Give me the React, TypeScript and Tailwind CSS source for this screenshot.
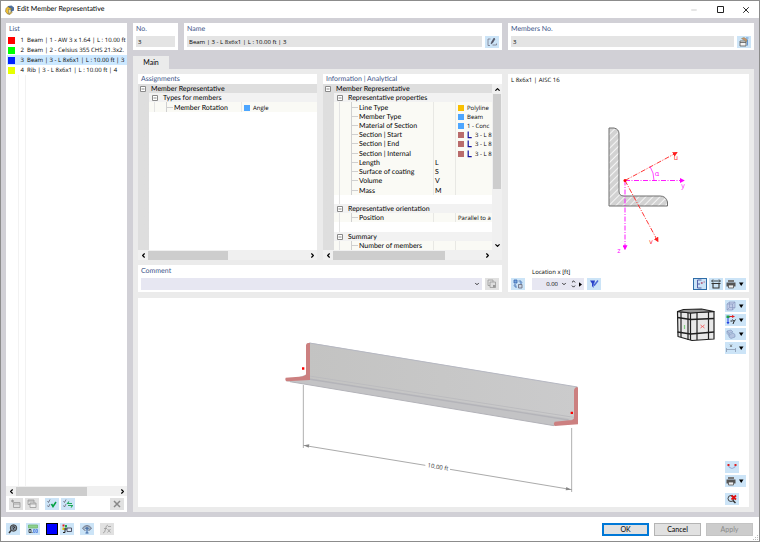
import type { ReactNode } from "react";
import { ChevronDown, ChevronLeft, ChevronRight, ChevronUp, Minus, X } from "lucide-react";
import clsx from "clsx";

// compact face for values and codes, the rest of the dialog uses the root font
const dataText = "font-['Open_Sans','Noto_Sans',sans-serif] text-[6px]";

const members = [
  { no: 1, color: "bg-[#ff0000]", label: "Beam | 1 - AW 3 x 1.64 | L : 10.00 ft" },
  { no: 2, color: "bg-[#00ff00]", label: "Beam | 2 - Celsius 355 CHS 21.3x2." },
  { no: 3, color: "bg-[#0022ff]", label: "Beam | 3 - L 8x6x1 | L : 10.00 ft | 3" },
  { no: 4, color: "bg-[#e6ff00]", label: "Rib | 3 - L 8x6x1 | L : 10.00 ft | 4" },
];

type TreeRow = {
  kind: "root" | "group" | "item" | "blank";
  label?: string;
  symbol?: string;
  value?: string;
  swatch?: string;
  section?: boolean;
};

const assignments: TreeRow[] = [
  { kind: "root", label: "Member Representative" },
  { kind: "group", label: "Types for members" },
  { kind: "item", label: "Member Rotation", value: "Angle", swatch: "bg-[#4da6ff]" },
];

const information: TreeRow[] = [
  { kind: "root", label: "Member Representative" },
  { kind: "group", label: "Representative properties" },
  { kind: "item", label: "Line Type", value: "Polyline", swatch: "bg-[#f9c000]" },
  { kind: "item", label: "Member Type", value: "Beam", swatch: "bg-[#4da6ff]" },
  { kind: "item", label: "Material of Section", value: "1 - Conc", swatch: "bg-[#4da6ff]" },
  { kind: "item", label: "Section | Start", value: "3 - L 8", swatch: "bg-[#b96b6b]", section: true },
  { kind: "item", label: "Section | End", value: "3 - L 8", swatch: "bg-[#b96b6b]", section: true },
  { kind: "item", label: "Section | Internal", value: "3 - L 8", swatch: "bg-[#b96b6b]", section: true },
  { kind: "item", label: "Length", symbol: "L" },
  { kind: "item", label: "Surface of coating", symbol: "S" },
  { kind: "item", label: "Volume", symbol: "V" },
  { kind: "item", label: "Mass", symbol: "M" },
  { kind: "blank" },
  { kind: "group", label: "Representative orientation" },
  { kind: "item", label: "Position", value: "Parallel to a" },
  { kind: "blank" },
  { kind: "group", label: "Summary" },
  { kind: "item", label: "Number of members" },
];

function Icon({ children }: { children: ReactNode }) {
  return (
    <svg viewBox="0 0 20 20" className="size-[10px] shrink-0" fill="none" stroke="#444" strokeWidth="1.6">
      {children}
    </svg>
  );
}

function ToolButton({ label, children, menu, disabled, active }: {
  label: string;
  children: ReactNode;
  menu?: boolean;
  disabled?: boolean;
  active?: boolean;
}) {
  return (
    <button
      type="button"
      aria-label={label}
      disabled={disabled}
      className={clsx(
        "flex h-3 shrink-0 items-center",
        menu ? "w-[21px] justify-between px-px" : "w-[14px] justify-center",
        disabled ? "bg-[#e1e1e1]" : "bg-[#cce4f7]",
        active && "border border-[#2f6da8]",
      )}
    >
      {children}
      {menu && <Caret />}
    </button>
  );
}

function Caret() {
  return (
    <svg viewBox="0 0 8 8" className="size-2 shrink-0">
      <path d="M2 2.5h4.5L4.2 6z" fill="#000" />
    </svg>
  );
}

const printIcon = (
  <Icon>
    <path d="M4 2h12v4H4z" fill="#777" stroke="none" />
    <path d="M1 7h18v8H1z" fill="#555" stroke="none" />
    <path d="M5 12h10v6H5z" fill="#eee" stroke="#555" />
  </Icon>
);

function PanelTitle({ children }: { children: ReactNode }) {
  return <h2 className="h-[10px] px-[3px] leading-[11px] text-[#3c5488]">{children}</h2>;
}

function HScroll({ thumb, corner }: { thumb: string; corner?: boolean }) {
  return (
    <div className="flex h-[10px] shrink-0 items-center bg-[#f0f0f0]">
      <button type="button" aria-label="Scroll left" className="flex w-[10px] justify-center">
        <ChevronLeft className="size-[7px]" strokeWidth={4} />
      </button>
      <div className="h-[9px] flex-1">
        <div className={clsx("h-full bg-[#cdcdcd]", thumb)} />
      </div>
      <button type="button" aria-label="Scroll right" className="flex w-[10px] justify-center">
        <ChevronRight className="size-[7px]" strokeWidth={4} />
      </button>
      {corner && <div className="w-[10px]" />}
    </div>
  );
}

function Toggle() {
  return (
    <svg viewBox="0 0 6 6" className="size-[6px] shrink-0" fill="#fff" stroke="#8a8a8a" strokeWidth="1">
      <path d="M.5 .5h5v5h-5zM1.5 3h3" />
    </svg>
  );
}

function Tree({ rows, symbols }: { rows: TreeRow[]; symbols?: boolean }) {
  return (
    <div className="grid min-h-0 flex-1 grid-rows-[repeat(18,minmax(0,1fr))] overflow-hidden bg-white bg-linear-to-r from-[#dedede] from-[11px] to-white to-[11px] leading-[10px]">
      {rows.map((row, i) => {
        if (row.kind === "blank") return <div key={i} className="ml-4 border-l border-[#e4e4e4]" />;
        if (row.kind === "root") {
          return (
            <div key={i} className="flex items-center gap-[5px] bg-[#dedede] pt-px pl-[2px]">
              <Toggle />
              <span>{row.label}</span>
            </div>
          );
        }
        if (row.kind === "group") {
          return (
            <div key={i} className="ml-[11px] flex items-center gap-[5px] bg-[#f2f2f2] pt-px pl-[3px]">
              <Toggle />
              <span>{row.label}</span>
            </div>
          );
        }
        return (
          <div key={i} className="ml-[11px] flex items-stretch bg-[#fafaf5] whitespace-nowrap">
            <div className="ml-[5px] w-3 shrink-0 border-l border-[#e4e4e4]" />
            <div className="flex w-2 shrink-0 items-center border-l border-[#d0d0d0]">
              <div className="h-px w-[6px] bg-[#d0d0d0]" />
            </div>
            <div className={clsx("flex shrink-0 items-center pt-px", symbols ? "w-[74px]" : "w-[67px]")}>{row.label}</div>
            {symbols && (
              <div className="flex w-[22px] shrink-0 items-center border-l border-[#e8e8e4] pt-px pl-px">{row.symbol}</div>
            )}
            <div className={clsx("flex min-w-0 flex-1 items-center gap-[3px] border-l border-[#e8e8e4] pt-px pl-[2px]", dataText)}>
              {row.swatch && <span className={clsx("size-[6px] shrink-0", row.swatch)} />}
              {row.section && (
                <svg viewBox="0 0 5 8" className="h-2 w-[5px] shrink-0" fill="none" stroke="#1414a0" strokeWidth="1.2">
                  <path d="M1.2 0.6v6h3.500" />
                </svg>
              )}
              <span>{row.value}</span>
            </div>
          </div>
        );
      })}
    </div>
  );
}

function TitleBar() {
  return (
    <header className="flex h-[17px] shrink-0 items-center bg-white pl-[4px]">
      <svg viewBox="0 0 20 20" className="size-[10px]">
        <path d="M6 2l7-1 5 4v6l-6 3-7-3z" fill="#4d6f9e" />
        <path d="M2 7l4-4 3 3 4 1-2 4 3 4-4 4-5-1-4-5z" fill="#f0c030" stroke="#6a5a30" strokeWidth="1" />
        <path d="M7 8l5 2v5l-5 2z" fill="#e8e0b0" stroke="#555" strokeWidth=".8" />
      </svg>
      <h1 className="ml-[2px] flex-1 leading-[17px]">Edit Member Representative</h1>
      <button type="button" aria-label="Minimize" className="flex w-[26px] justify-center text-[#ccc]">
        <Minus className="size-2" strokeWidth={3} />
      </button>
      <button type="button" aria-label="Maximize" className="flex w-[26px] justify-center">
        <svg viewBox="0 0 7 7" className="size-[7px]" fill="none" stroke="#222">
          <path d="M.5 .5h6v6h-6z" />
        </svg>
      </button>
      <button type="button" aria-label="Close" className="flex w-[26px] justify-center">
        <X className="size-[10px]" strokeWidth={2} />
      </button>
    </header>
  );
}

function MemberList() {
  return (
    <aside className="flex w-[121px] shrink-0 flex-col bg-white">
      <h2 className="h-3 px-[3px] leading-[12px] text-[#3c5488]">List</h2>
      <ul className={clsx("flex flex-1 flex-col bg-white leading-[10px]", dataText)}>
        {members.map((m) => (
          <li
            key={m.no}
            className={clsx("ml-px flex h-[10px] items-center pl-px whitespace-nowrap", m.no === 3 && "bg-[#cce8ff]")}
          >
            <span className={clsx("size-[7px] shrink-0", m.color)} />
            <span className="w-[9px] shrink-0 text-right">{m.no}</span>
            <span className="ml-[3px]">{m.label}</span>
          </li>
        ))}
        <li aria-hidden="true" className="ml-3 w-2 flex-1 border-x border-[#f2f2f2]" />
      </ul>
      <HScroll thumb="w-[70%]" />
      <div className="flex h-4 items-center gap-[2px] px-[3px]">
        <ToolButton label="New" disabled>
          <Icon>
            <path d="M5 7h13v10H5zM5 10h13M3 1v6M0 4h6M1 2l4 4M5 2L1 6" stroke="#999" />
          </Icon>
        </ToolButton>
        <ToolButton label="Copy" disabled>
          <Icon>
            <path d="M2 2h12v9H2zM2 4h12" stroke="#999" />
            <path d="M6 8h12v9H6zM6 10h12" fill="#eee" stroke="#999" />
          </Icon>
        </ToolButton>
        <span className="w-[2px]" />
        <ToolButton label="Select all">
          <Icon>
            <path d="M1 4l2 3 3-6M1 13l2 3 3-6" stroke="#667" />
            <path d="M9 10l3 5 6-9" stroke="#00a040" strokeWidth="3" />
          </Icon>
        </ToolButton>
        <ToolButton label="Invert selection">
          <Icon>
            <path d="M1 4l2 3 3-6M1 13l2 3 3-6" stroke="#667" />
            <path d="M18 9h-9l3-4M10 13h9l-3 4" stroke="#20a858" strokeWidth="2.200" />
          </Icon>
        </ToolButton>
        <span className="flex-1" />
        <ToolButton label="Delete" disabled>
          <Icon>
            <path d="M4 4l12 12M16 4L4 16" stroke="#888" strokeWidth="3" />
          </Icon>
        </ToolButton>
      </div>
    </aside>
  );
}

function Field({ id, label, value, className, children }: {
  id: string;
  label: string;
  value: string;
  className: string;
  children?: ReactNode;
}) {
  return (
    <div className={clsx("h-[27px] bg-white px-[3px]", className)}>
      <label htmlFor={id} className="block h-3 leading-[12px] text-[#3c5488]">{label}</label>
      <div className="flex h-[13px] items-center gap-[3px]">
        <input
          id={id}
          readOnly
          value={value}
          className={clsx("h-[11px] w-full min-w-0 flex-1 bg-[#e4e4e4] px-[2px] outline-none", dataText)}
        />
        {children}
      </div>
    </div>
  );
}

function SectionPreview() {
  return (
    <section className="flex w-[241px] shrink-0 flex-col bg-white px-[3px]">
      <h2 className={clsx("h-3 leading-[12px]", dataText)}>L 8x6x1 | AISC 16</h2>
      <svg viewBox="511 86 235 180" className={clsx("min-h-0 w-full flex-1", dataText)}>
        <defs>
          <pattern id="hatch" width="5" height="5" patternUnits="userSpaceOnUse" patternTransform="rotate(45)">
            <rect width="5" height="5" fill="#d2d2d2" />
            <path d="M0 0v5" stroke="#fff" strokeWidth="1.6" />
          </pattern>
          <marker id="arrow" viewBox="0 0 6 6" refX="5" refY="3" markerWidth="5" markerHeight="5" orient="auto" markerUnits="userSpaceOnUse">
            <path d="M0 0l6 3-6 3z" fill="context-stroke" />
          </marker>
        </defs>
        <path
          d="M609 127.500h5q5 1 5 6v57q0 5 5 5h36q6 0 7.500 6v4H609z"
          fill="url(#hatch)"
          stroke="#707070"
          strokeWidth="1"
        />
        <g fill="none" strokeWidth="0.9" strokeDasharray="5 1.500 1 1.500">
          <path d="M625 180h59" stroke="#ff00ff" markerEnd="url(#arrow)" />
          <path d="M625 180v69" stroke="#ff00ff" markerEnd="url(#arrow)" />
          <path d="M625 180l52-28" stroke="#ff2020" markerEnd="url(#arrow)" />
          <path d="M625 180l33 61" stroke="#ff2020" markerEnd="url(#arrow)" />
        </g>
        <path d="M654 180q0-8-4-14" fill="none" stroke="#ff00ff" strokeWidth="0.7" />
        <circle cx="625" cy="180" r="1.500" fill="#ff0000" />
        <g fontSize="7" textAnchor="middle">
          <text x="676" y="159" fill="#ff2020">u</text>
          <text x="683" y="187" fill="#ff00ff">y</text>
          <text x="657" y="175" fill="#ff00ff">α</text>
          <text x="651" y="243" fill="#ff2020">v</text>
          <text x="619" y="252" fill="#ff00ff">z</text>
        </g>
      </svg>
      <div className="flex items-end pb-[2px]">
        <ToolButton label="Switch section">
          <Icon>
            <path d="M2 2h6v6H2z" fill="#7aa7dc" stroke="#3565b0" />
            <path d="M11 11h7v7h-7z" fill="#c8d4e4" stroke="#667" />
            <path d="M11 4h5v5M8 16H4v-5M14 7l2 2 2-2M2 13l2-2 2 2" stroke="#3565b0" />
          </Icon>
        </ToolButton>
        <div className={clsx("ml-[7px]", dataText)}>
          <label htmlFor="location" className="block leading-[10px]">Location x [ft]</label>
          <div className="mt-px flex h-3 w-[52px] items-center bg-[#e7e7f2]">
            <input id="location" defaultValue="0.00" className="w-[26px] bg-transparent text-right outline-none" />
            <ChevronDown className="ml-[3px] size-[6px]" strokeWidth={3} />
            <span className="ml-[4px] flex flex-col">
              <ChevronUp className="size-[5px]" strokeWidth={4} />
              <ChevronDown className="size-[5px]" strokeWidth={4} />
            </span>
            <svg viewBox="0 0 4 6" className="ml-[3px] h-[5px] w-[3px]">
              <path d="M0 0l4 3-4 3z" />
            </svg>
          </div>
        </div>
        <span className="w-[3px]" />
        <ToolButton label="Pick location">
          <Icon>
            <path d="M2 3h10l-1 4-2 4v7l-3-4V9z" fill="#2840c8" stroke="none" />
            <path d="M8 9l3 3 7-9" stroke="#4a68d8" strokeWidth="3" />
          </Icon>
        </ToolButton>
        <span className="flex-1" />
        <div className="flex gap-[2px]">
          <ToolButton label="Section axes" active>
            <Icon>
              <path d="M5 2h8M5 2v16M5 18h8M5 10h5" stroke="#5560a8" strokeWidth="2" />
              <path d="M12 6l3 4M15 6l-3 4M17 6h3" stroke="#b05070" />
            </Icon>
          </ToolButton>
          <ToolButton label="Dimensions">
            <Icon>
              <path d="M2 4h16M4 1L1 4l3 3M16 1l3 3-3 3" stroke="#222" />
              <path d="M1 9h18M4 9v9h12V9" stroke="#333" strokeWidth="2.200" />
            </Icon>
          </ToolButton>
          <ToolButton label="Print section" menu>{printIcon}</ToolButton>
        </div>
      </div>
    </section>
  );
}

function NavigationCube() {
  return (
    <g stroke="#202020" strokeLinejoin="round">
      <path d="M677.500 311.500l13 1.500 23.500-1.500v27.500l-22 1.500-14-4z" fill="#e8e8e8" strokeWidth="1.200" />
      <path d="M677.500 311.500l6-2 18-.5 12.500 2.500-23.500 1.500z" fill="#999" strokeWidth="1.200" />
      <path d="M681 312v25M690.500 313v27M688 313v27M697 312.500v27.500M708.500 312v27" fill="none" strokeWidth="1.200" />
      <path d="M677.500 317.500l13 2 23.500-1M677.500 332l13 2 23.500-2" fill="none" strokeWidth="1.400" />
      <path d="M700.500 325l4 3M704.500 325l-4 3" stroke="#f06060" strokeWidth="0.900" />
      <path d="M684.500 325v4" stroke="#80d080" strokeWidth="1.200" />
    </g>
  );
}

function ModelView() {
  return (
    <section className="flex min-h-0 flex-1 bg-white pr-[3px]">
      <svg viewBox="138 298 587 209" className={clsx("h-full min-w-0 flex-1", dataText)}>
        <defs>
          <linearGradient id="web" x1="0" y1="0" x2="1" y2="0">
            <stop offset="0" stopColor="#c3c3c2" />
            <stop offset="1" stopColor="#cbcbcc" />
          </linearGradient>
        </defs>
        <g transform="translate(270 330) scale(.33333)">
          <path d="M48 154l60-20 808 130v12l-64 11L80 158z" fill="#c3c3c5" />
          <path d="M112 40l8-2 804 133-8 97L116 145z" fill="url(#web)" />
          <path d="M118 39l804 132" stroke="#b6b8c2" strokeWidth="3" />
          <path d="M118 138l794 124" fill="none" stroke="#bcbcbf" strokeWidth="3" />
          <path d="M116 147l780 123" fill="none" stroke="#b4b4b9" strokeWidth="4" />
          <path d="M60 155l792 132" stroke="#b2b2b8" strokeWidth="3" />
          <path d="M108 46q0-6 6-7l6 0v111l-70 4q-6-3-3-11l40-3q21-1 21-8z" fill="#cc8080" />
          <path d="M912 180q2-8 8-9l4 2v110l-70 5q-5-7 0-13l44-4q14-1 14-8z" fill="#cc8080" />
          <path d="M96 112h7v7h-7zM902 245h7v7h-7z" fill="#ff0000" />
          <path d="M100 165v189M905 294v192" stroke="#b0b0b0" strokeWidth="3" />
          <path d="M100 346l366 60M540 418l366 61" stroke="#999" strokeWidth="2.500" />
          <path d="M102 346l16-3-2 10zM904 479l-15-8-2 10z" fill="#888" />
        </g>
        <text x="438" y="469" fontSize="6" textAnchor="middle" fill="#333" transform="rotate(9 438 467)">10.00 ft</text>
        <NavigationCube />
      </svg>
      <div className="flex shrink-0 flex-col gap-[2px] py-[2px]">
        <ToolButton label="Rendering mode" menu>
          <Icon>
            <path d="M2 6l5-4h11v11l-5 5H2z" fill="#c0cce8" stroke="#8898c0" strokeWidth="1.300" />
            <path d="M2 6h11v12M13 6l5-4M7 2v11h11M7 13l-5 5" stroke="#8898c0" strokeWidth="1.300" />
          </Icon>
        </ToolButton>
        <ToolButton label="View direction" menu>
          <Icon>
            <path d="M4 3h11" stroke="#e02020" strokeWidth="2" />
            <path d="M12 0l6 3-6 3z" fill="#e02020" stroke="none" />
            <path d="M4 3v13" stroke="#2040e0" strokeWidth="2" />
            <path d="M1 1h6v5H1z" fill="#20a050" stroke="none" />
            <path d="M1 14h6l-3 5z" fill="#2040e0" stroke="none" />
            <path d="M9 12h4M13 9l3 4 3-4M16 13l-2 5" stroke="#222" strokeWidth="2" />
          </Icon>
        </ToolButton>
        <ToolButton label="Visibility" menu>
          <Icon>
            <path d="M2 4l8-2 4 4-8 3zM2 4v5l4 4V9M6 12l8-4 4 3v5l-8 3-4-3z" fill="#b4c4e0" stroke="#8096bc" strokeWidth="1.200" />
          </Icon>
        </ToolButton>
        <ToolButton label="Show dimensions" menu>
          <Icon>
            <path d="M1 10v8M19 10v8M1 13h18" stroke="#8898b0" />
            <path d="M8 3l4 5M12 3l-4 5" stroke="#555" strokeWidth="1.300" />
          </Icon>
        </ToolButton>
        <span className="flex-1" />
        <ToolButton label="Deformation">
          <Icon>
            <path d="M2 7q8 12 16 0" stroke="#9cb0d8" strokeWidth="2.400" />
            <path d="M1 4h4v4H1zM15 4h4v4h-4z" fill="#e02020" stroke="none" />
          </Icon>
        </ToolButton>
        <ToolButton label="Print view" menu>{printIcon}</ToolButton>
        <span className="h-[2px]" />
        <ToolButton label="Reset zoom">
          <Icon>
            <circle cx="8" cy="9" r="6" stroke="#444" strokeWidth="2" />
            <path d="M12 13l5 5" stroke="#333" strokeWidth="3" />
            <path d="M9 3l9 8M18 3l-9 8" stroke="#e01010" strokeWidth="3.500" />
          </Icon>
        </ToolButton>
      </div>
    </section>
  );
}

function Footer() {
  return (
    <footer className="relative flex h-6 shrink-0 items-center bg-white pr-[6px] pl-[5px]">
      <div className="flex flex-1 items-center gap-[6px]">
        <ToolButton label="Help">
          <Icon>
            <circle cx="11" cy="8" r="6.500" fill="#7d8a98" stroke="#444" strokeWidth="2" />
            <path d="M6 13l-4 5" stroke="#333" strokeWidth="3" />
            <path d="M9 6q2-3 4 0 0 2-2 3v2" stroke="#111" />
          </Icon>
        </ToolButton>
        <ToolButton label="Units">
          <Icon>
            <path d="M1 2h18v6H1z" fill="#8ed08e" stroke="#70b870" />
            <path d="M2 11h4v6H2zM8 16v2" stroke="#222" />
            <path d="M11 11h3v6h-3zM16 11h3v6h-3z" stroke="#5080e0" />
          </Icon>
        </ToolButton>
        <div className="flex items-center gap-[2px]">
          <button type="button" aria-label="Color" className="size-3 border border-black bg-[#0000ff]" />
          <ToolButton label="Display colors">
            <Icon>
              <path d="M1 1h4v4H1z" fill="#e02020" stroke="none" />
              <path d="M6 2h4v5H6z" fill="#20a050" stroke="none" />
              <path d="M1 7h4v5H1z" fill="#e0c000" stroke="none" />
              <path d="M6 8v9H2M6 10h5" stroke="#222" strokeWidth="2" />
              <path d="M10 8h9v7h-9z" fill="#dce8f8" stroke="#334" />
            </Icon>
          </ToolButton>
        </div>
        <ToolButton label="View settings">
          <Icon>
            <path d="M1 8q9-10 18 0-3 5-6 5M1 8q3 5 6 5" fill="#9cb0c4" stroke="#667" />
            <path d="M10 7v11M7 10l3-3 3 3M7 18h6" stroke="#3560a0" strokeWidth="2" />
          </Icon>
        </ToolButton>
        <ToolButton label="Formula" disabled>
          <Icon>
            <path d="M2 18q4 0 5-8t5-8M4 9h6M11 10l6 7M17 10l-6 7M12 5h6" stroke="#999" />
          </Icon>
        </ToolButton>
      </div>
      <div className="flex gap-[5px]">
        <button type="button" className="h-[13px] w-[47px] border-2 border-[#0078d7] bg-[#e1e1e1] leading-[9px]">OK</button>
        <button type="button" className="h-[13px] w-[47px] border border-[#b4b4b4] bg-[#e1e1e1] leading-[11px]">Cancel</button>
        <button type="button" disabled className="h-[13px] w-[47px] border border-[#c4c4c4] bg-[#cccccc] leading-[11px] text-[#8a8a8a]">Apply</button>
      </div>
      <svg viewBox="0 0 6 6" className="absolute right-0 bottom-0 size-[6px]" fill="#bbb">
        <path d="M4 0h1v1H4zM4 2h1v1H4zM2 2h1v1H2zM4 4h1v1H4zM2 4h1v1H2zM0 4h1v1H0z" />
      </svg>
    </footer>
  );
}

export default function App() {
  return (
    <div className="flex h-screen flex-col border border-[#8c8c8c] bg-[#d1d0d6] font-['Lato','Open_Sans',sans-serif] text-[7px] leading-[9px] text-black [text-rendering:geometricPrecision]">
      <TitleBar />
      <main className="flex min-h-0 flex-1 gap-[6px] px-[5px] py-[5px]">
        <MemberList />
        <div className="flex min-w-0 flex-1 flex-col">
          <div className="flex gap-[6px]">
            <Field id="no" label="No." value="3" className="w-[45px]" />
            <Field id="name" label="Name" value="Beam | 3 - L 8x6x1 | L : 10.00 ft | 3" className="flex-1">
              <ToolButton label="Edit name">
                <Icon>
                  <path d="M7 4H2v13h4M11 16h8v-3" stroke="#778" />
                  <path d="M8 14l1-4 5-8 2 2-5 8z" fill="#556" stroke="#445" strokeWidth="1" />
                </Icon>
              </ToolButton>
            </Field>
            <Field id="members" label="Members No." value="3" className="w-[246px]">
              <ToolButton label="Select members">
                <Icon>
                  <path d="M2 8h12v10H2zM2 11h12" fill="#f4f4f4" stroke="#555" />
                  <path d="M5 3l5-2 6 4v4l-5-2z" fill="#c89070" stroke="#885" strokeWidth="1" />
                  <path d="M14 2h5M17 5v12" stroke="#4a80c8" />
                </Icon>
              </ToolButton>
            </Field>
          </div>
          <div role="tablist" className="mt-[6px] flex">
            <button role="tab" aria-selected="true" type="button" className="h-[13px] w-9 bg-[#ebebeb]">Main</button>
          </div>
          <div className="flex min-h-0 flex-1 flex-col gap-[6px] bg-[#ebebeb] p-[5px]">
            <div className="flex h-[218px] shrink-0 gap-[6px]">
              <div className="flex min-w-0 flex-1 flex-col gap-[5px]">
                <div className="flex min-h-0 flex-1 gap-[6px]">
                  <section className="flex min-w-0 flex-1 flex-col bg-white">
                    <PanelTitle>Assignments</PanelTitle>
                    <Tree rows={assignments} />
                    <HScroll thumb="w-1/2" />
                  </section>
                  <section className="flex min-w-0 flex-1 flex-col bg-white">
                    <PanelTitle>Information | Analytical</PanelTitle>
                    <div className="flex min-h-0 flex-1">
                      <Tree rows={information} symbols />
                      <div className="flex w-[10px] shrink-0 flex-col items-center bg-[#f0f0f0]">
                        <button type="button" aria-label="Scroll up" className="flex h-[10px] items-center">
                          <ChevronUp className="size-[7px]" strokeWidth={4} />
                        </button>
                        <div className="w-2 flex-1">
                          <div className="h-[65%] bg-[#cdcdcd]" />
                        </div>
                        <button type="button" aria-label="Scroll down" className="flex h-[10px] items-center">
                          <ChevronDown className="size-[7px]" strokeWidth={4} />
                        </button>
                      </div>
                    </div>
                    <HScroll thumb="w-3/4" corner />
                  </section>
                </div>
                <section className="h-[27px] shrink-0 bg-white px-[3px]">
                  <label htmlFor="comment" className="block h-3 leading-[12px] text-[#3c5488]">Comment</label>
                  <div className="flex h-[13px] items-center gap-[3px]">
                    <div className="relative flex-1">
                      <select id="comment" className="block h-3 w-full appearance-none bg-[#e7e7f2] outline-none">
                        <option></option>
                      </select>
                      <ChevronDown className="pointer-events-none absolute top-[3px] right-[2px] size-[6px]" strokeWidth={3} />
                    </div>
                    <ToolButton label="Copy comment" disabled>
                      <Icon>
                        <path d="M2 2h10v11H2z" stroke="#999" />
                        <path d="M6 6h11v11H6z" fill="#ddd" stroke="#999" />
                        <path d="M12 12h5v5h-5z" fill="#999" stroke="none" />
                      </Icon>
                    </ToolButton>
                  </div>
                </section>
              </div>
              <SectionPreview />
            </div>
            <ModelView />
          </div>
        </div>
      </main>
      <Footer />
    </div>
  );
}
